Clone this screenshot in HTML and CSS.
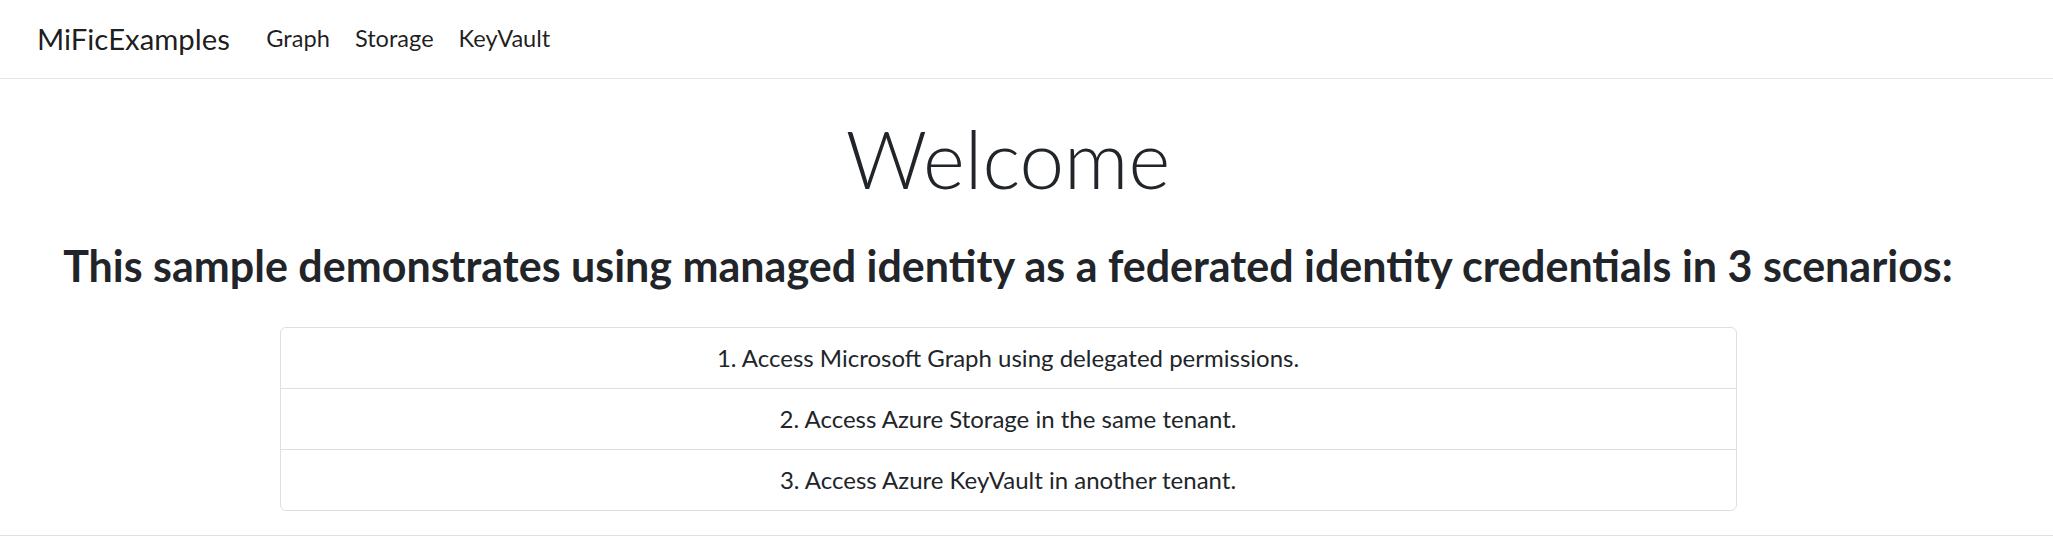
FILE: index.html
```html
<!DOCTYPE html>
<html lang="en">
<head>
<meta charset="utf-8">
<title>MiFicExamples</title>
<link rel="stylesheet" href="styles.css">
</head>
<body>
<header class="navbar">
  <a class="brand" href="#">MiFicExamples</a>
  <nav class="nav-links">
    <a class="nav-link" href="#">Graph</a>
    <a class="nav-link" href="#">Storage</a>
    <a class="nav-link" href="#">KeyVault</a>
  </nav>
</header>
<main class="main">
  <h1 class="display">Welcome</h1>
  <h3 class="subtitle">This sample demonstrates using managed identity as a federated identity credentials in 3 scenarios:</h3>
  <ul class="list-group">
    <li class="list-item">1. Access Microsoft Graph using delegated permissions.</li>
    <li class="list-item">2. Access Azure Storage in the same tenant.</li>
    <li class="list-item">3. Access Azure KeyVault in another tenant.</li>
  </ul>
</main>
<footer class="footer"></footer>
</body>
</html>
```
FILE: styles.css
```css
* { box-sizing: border-box; }
html, body { margin: 0; padding: 0; }
body {
  font-family: "Lato", "Open Sans", sans-serif;
  color: #212529;
  background: #fff;
  font-size: 24px;
  line-height: 1.5;
}
.navbar {
  display: flex;
  align-items: center;
  height: 79px;
  padding: 0 0 0 37px;
  border-bottom: 1px solid #e5e5e5;
}
.brand {
  font-size: 29.3px;
  color: rgba(0, 0, 0, 0.9);
  text-decoration: none;
  margin-right: 24px;
  line-height: 1;
  padding-bottom: 1px;
}
.nav-links { display: flex; }
.nav-link {
  font-size: 23.6px;
  color: rgba(0, 0, 0, 0.88);
  text-decoration: none;
  padding: 0 12.5px;
  line-height: 1;
}
.main {
  width: 2016px;
  display: flex;
  flex-direction: column;
  align-items: center;
  text-align: center;
  padding-top: 31px;
}
.display {
  margin: 0;
  font-size: 80px;
  font-weight: 300;
  line-height: 1.2;
}
.subtitle {
  margin: 34px 0 0;
  font-size: 43px;
  font-weight: 700;
  line-height: 1.2;
  white-space: nowrap;
}
.list-group {
  list-style: none;
  margin: 35px 0 0;
  padding: 0;
  width: 1457px;
  border: 1px solid #dfdfdf;
  border-radius: 6px;
}
.list-item {
  padding: 12px 20px 12px;
  line-height: 36px;
  border-top: 1px solid #dfdfdf;
}
.list-item:first-child { border-top: none; }
.footer {
  margin-top: 24px;
  border-top: 1px solid #dee2e6;
  height: 7px;
}
```
